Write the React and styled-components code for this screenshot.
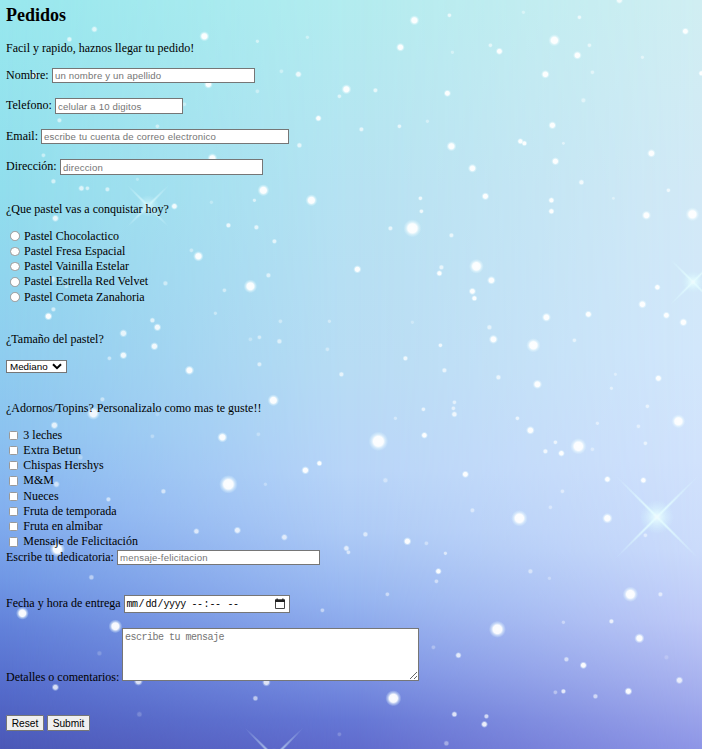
import React from 'react';
import styled, { createGlobalStyle } from 'styled-components';

const GlobalStyle = createGlobalStyle`
  * { box-sizing: border-box; }
  body { margin: 0; overflow: hidden; }
`;

const Page = styled.main`
  position: relative;
  isolation: isolate;
  width: 702px;
  height: 749px;
  overflow: hidden;
  padding: 5px 6px 0;
  color: #000;
  font-family: 'Liberation Serif', 'Times New Roman', serif;
  font-size: 12px;
  line-height: 16px;
`;

const Sky = styled.div`
  position: absolute;
  inset: 0;
  z-index: -1;
`;

const Tint = styled.div`
  position: absolute;
  inset: 0;
  background: linear-gradient(to bottom, ${(p) => p.$stops});
  mask-image: ${(p) => p.$mask || 'none'};
`;

const StarField = styled.svg`
  position: absolute;
  inset: 0;
`;

const Title = styled.h2`
  margin: 0 0 15px;
  font-size: 18px;
  line-height: 20px;
`;

const Text = styled.p`
  margin: ${(p) => p.$top || 0}px 0 ${(p) => p.$bottom || 0}px;
  height: 16px;
  white-space: nowrap;
`;

const Field = styled.div`
  display: flex;
  align-items: ${(p) => p.$align || 'center'};
  height: ${(p) => p.$height}px;
  margin-bottom: ${(p) => p.$gap}px;
`;

const Label = styled.label`
  flex: none;
  width: ${(p) => p.$width}px;
  margin-bottom: ${(p) => p.$lift ?? 1.5}px;
  white-space: nowrap;
`;

const Input = styled.input`
  width: ${(p) => p.$width}px;
  height: 100%;
  margin: 0;
  padding: 0 2px;
  border: 1px solid #767676;
  border-radius: 0;
  background: #fff;
  font: 9.6px 'Liberation Sans', Arial, sans-serif;
  letter-spacing: 0.17px;
  outline: none;
  &::placeholder { color: #757575; opacity: 1; }
`;

const Options = styled.div`
  display: grid;
  grid-auto-rows: 15.25px;
`;

const Option = styled.label`
  display: flex;
  align-items: center;
  gap: ${(p) => (p.$radio ? 4.5 : 5)}px;
  padding-left: ${(p) => (p.$radio ? 4 : 3)}px;
  line-height: 15px;
`;

const Tick = styled.input`
  appearance: none;
  flex: none;
  width: ${(p) => (p.type === 'radio' ? 9.5 : 9.3)}px;
  height: ${(p) => (p.type === 'radio' ? 9.5 : 9.3)}px;
  margin: 0;
  border: 1px solid #999;
  border-radius: ${(p) => (p.type === 'radio' ? '50%' : '1.5px')};
  background: #fff;
`;

const SizeSelect = styled.button`
  display: flex;
  align-items: center;
  justify-content: space-between;
  width: 61px;
  height: 13px;
  padding: 1px 4px 0 3px;
  border: 1px solid #767676;
  background: #fff;
  color: #000;
  font: 9.8px/11px 'Liberation Sans', Arial, sans-serif;
`;

const DateBox = styled.div`
  display: flex;
  align-items: center;
  width: 166px;
  height: 18px;
  padding: 0 3px 0 1px;
  border: 1px solid #767676;
  background: #fff;
  font: 10px 'Liberation Mono', monospace;
  line-height: 17px;
  letter-spacing: -0.4px;
`;

const Segment = styled.span`
  width: ${(p) => p.$width}px;
  padding-left: 0.5px;
  padding-top: 2px;
`;

const CalendarIcon = styled.svg`
  margin-left: auto;
`;

const Comments = styled.textarea`
  width: 297px;
  height: 53px;
  margin: 0;
  padding: 2px;
  border: 1px solid #767676;
  border-radius: 0;
  background: #fff;
  font: 10px/13px 'Liberation Mono', monospace;
  letter-spacing: -0.5px;
  outline: none;
  resize: both;
  &::placeholder { color: #757575; opacity: 1; }
`;

const Actions = styled.div`
  display: flex;
  gap: 3px;
`;

const ActionButton = styled.button`
  width: ${(p) => p.$width}px;
  height: 16px;
  padding: 1px 0 0;
  border: 1px solid #767676;
  border-radius: 1px;
  background: #efefef;
  color: #000;
  font: 10.2px/13px 'Liberation Sans', Arial, sans-serif;
`;

// x, y, radius, opacity
const STARS = [
  [414,20,4],[449,15,2,.7],[400,47,3.5],[346,89,4],[339,96,2,.6],[375,90,2.2,.7],[447,93,3],[318,118,2.7],
  [361,129,2.2,.7],[399,126,2,.7],[427,121,1.8,.4],[451,146,4],[472,168,3.6],[485,196,3.2],[311,200,4.7],
  [420,198,2,.8],[421,211,2,.8],[412,228,7],[390,228,2.2,.7],[451,235,2.2,.7],[554,40,4.8],[577,55,3.5],
  [545,74,3.5],[499,51,3],[490,45,2,.6],[579,17,2,.7],[589,45,2,.6],[592,72,2,.5],[583,100,2.3,.5],
  [552,125,3.3],[520,141,2.6],[524,143,2.4],[563,143,1.6,.5],[555,161,3.3],[581,182,2.5,.8],[551,200,2.6],
  [551,211,2.6],[685,31,3],[701,73,2.5],[642,57,1.8,.5],[651,153,3.5],[668,190,2,.7],[613,198,1.6,.4],
  [646,215,3.8],[692,214,5.5],[452,52,1.8,.4],[523,12,1.8,.4],[307,37,1.8,.4],[619,0,3,.8],
  [357,269,3.3],[441,267,2.3,.7],[439,273,2.6],[476,266,5.8],[491,280,3.5],[472,291,3],[474,298,2.5],
  [329,321,1.8,.4],[412,322,1.8,.3],[327,349,2,.4],[341,374,2.3,.7],[405,358,2.3,.8],[440,345,2,.8],
  [444,370,2.3,.7],[489,327,2.4,.6],[493,339,3.7],[546,317,3.7],[588,314,3],[533,345,5.6],[574,340,2,.6],
  [498,377,2.4,.7],[537,384,3.8],[657,287,2.7],[642,304,3.5],[666,315,3],[683,322,3.4],[615,374,1.7,.4],
  [611,388,1.8,.5],[658,378,3],[647,406,2,.6],[454,402,2,.6],[453,408,2,.6],[454,414,2.6,.8],[423,409,2,.7],
  [395,418,1.8,.4],[378,441,7.6],[424,435,2.8],[517,418,2,.7],[530,430,3.5],[597,423,1.8,.5],[678,421,5.5],
  [638,426,2,.5],[645,443,2,.6],[555,442,2,.7],[545,451,2.3,.8],[561,453,2.8],[578,446,6.4],[592,449,2,.4],
  [305,470,3.3],[319,463,2.5],[385,480,2.4,.4],[465,474,3],[607,479,2.8],[643,480,2.7],[562,491,2,.5],
  [519,518,6.4],[607,518,4.2],[472,510,2.2,.5],[550,507,2,.4],[365,534,2.4,.6],[346,548,2.6,.7],[348,552,2,.6],
  [407,541,3.3],[426,543,2,.4],[445,553,1.8,.6],[438,571,2.7],[436,581,2,.5],[387,594,2,.5],[322,610,2,.5],
  [530,571,2.3,.5],[549,578,1.8,.3],[630,594,6],[660,594,2.2,.6],[497,629,6.6],[563,622,1.8,.4],
  [611,621,2.2,.8],[639,638,4],[458,655,2.6,.8],[433,647,2,.3],[566,659,2.3,.6],[583,665,3],[679,680,3.1,.8],
  [628,691,3.2],[563,691,2.2,.8],[555,692,2,.4],[595,696,2.3,.6],[666,657,2.2,.2],[393,698,6.2],[454,714,2.5,.8],
  [484,724,2.8,.9],[486,716,2.2,.7],[446,743,2.4,.4],[339,734,2,.2],[645,535,2,.5],
  [204,36,4],[94,29,2.7,.7],[69,39,2.4,.7],[257,41,1.8,.5],[34,75,3.5,.7],[281,71,2,.4],[298,74,2.8,.8],
  [208,84,3.5],[257,91,2,.4],[184,104,2,.4],[59,120,2.2,.6],[157,126,2,.5],[299,145,2.4,.7],[212,158,4],
  [43,155,2,.5],[53,181,2.3,.6],[81,188,2.6,.7],[87,188,2,.6],[107,189,2.2,.6],[76,166,2,.5],[137,179,1.7,.3],
  [263,190,4.7],[254,200,1.8,.6],[174,206,2.8,.9],[55,218,3,.8],[228,225,2.3,.8],[256,227,2.3,.7],
  [211,202,1.8,.3],[274,241,2.2,.7],[198,256,4.1],[191,250,2,.4],[268,275,2.3,.6],[250,286,5.3],[165,283,2.3,.5],
  [224,290,2,.5],[52,279,3,.6],[66,286,2,.4],[53,309,2.2,.6],[48,316,3.3],[152,320,2.4,.7],[157,327,3.2,.9],
  [215,313,1.8,.4],[123,333,3.3,.8],[109,358,2,.5],[123,355,3.2,.9],[154,346,3.3,.9],[189,370,3.8],
  [280,321,2,.4],[259,337,2,.5],[279,341,2.4,.6],[250,339,2,.3],[259,364,2.2,.6],[102,399,2.2,.5],
  [273,400,4.6],[93,413,5.2,.9],[54,425,3.2,.8],[157,414,2,.2],[152,436,2,.3],[222,437,4.1],[258,434,2,.3],
  [228,484,7.2],[56,484,2.8,.6],[80,457,2.5,.3],[163,491,2.3,.6],[108,499,2.2,.6],[265,484,1.8,.3],
  [57,549,6],[196,531,2.6,.7],[237,530,3,.8],[284,537,2.8,.7],[91,577,2.4,.5],[22,613,5],[115,626,5.3],
  [55,687,3,.8],[138,681,3.6,.8],[266,682,3.4,.8],[255,698,2.4,.6],[139,714,2.5,.2],[99,653,2.3,.2],
];

const FLARES = [
  { x: 657, y: 517, r: 54, core: 17, o: 0.9 },
  { x: 693, y: 282, r: 29, core: 11, o: 0.85 },
  { x: 148, y: 206, r: 27, core: 11, o: 0.65 },
  { x: 274, y: 757, r: 38, core: 9, o: 0.6 },
];

const CENTER_MASK = 'linear-gradient(to right, transparent, #000 50%)';
const RIGHT_MASK = 'linear-gradient(to right, transparent 50%, #000)';

function Background() {
  return (
    <Sky aria-hidden="true">
      <Tint $stops="#98e8ee 0, #91deed 190px, #8fceef 350px, #8cc3f0 430px, #83b0ef 510px, #7097e5 580px, #6180d9 630px, #546bcb 690px, #4b58b7 749px" />
      <Tint $mask={CENTER_MASK} $stops="#b3ecef 0, #b6e2f2 190px, #b8dcf4 370px, #b8d5f8 470px, #aecbf6 530px, #96b5f0 600px, #7c94e4 670px, #6577d5 720px, #606bcd 749px" />
      <Tint $mask={RIGHT_MASK} $stops="#d0eef2 0, #d2e9f6 190px, #d2e7fb 350px, #d1e2fc 460px, #cbdbfb 550px, #bec9f7 620px, #a9b3ef 680px, #8e96e6 749px" />
      <StarField width="702" height="749" viewBox="0 0 702 749">
        <defs>
          <radialGradient id="glow">
            <stop offset="0" stopColor="#fff" />
            <stop offset=".5" stopColor="#fff" stopOpacity=".97" />
            <stop offset=".7" stopColor="#f2fdff" stopOpacity=".5" />
            <stop offset="1" stopColor="#dff8ff" stopOpacity="0" />
          </radialGradient>
          <radialGradient id="ray">
            <stop offset="0" stopColor="#f2ffff" />
            <stop offset=".35" stopColor="#e4fdff" stopOpacity=".8" />
            <stop offset="1" stopColor="#d8f8ff" stopOpacity="0" />
          </radialGradient>
          <radialGradient id="core">
            <stop offset="0" stopColor="#f6ffff" />
            <stop offset=".3" stopColor="#e6ffff" stopOpacity=".7" />
            <stop offset="1" stopColor="#d4f7ff" stopOpacity="0" />
          </radialGradient>
        </defs>
        {STARS.map(([x, y, r, o = 1], i) => (
          <circle key={i} cx={x + 0.4} cy={y + 0.3} r={r * 1.3} opacity={o * 0.97} fill="url(#glow)" />
        ))}
        {FLARES.map(({ x, y, r, core, o }) => (
          <g key={x} transform={`translate(${x} ${y}) rotate(45)`} opacity={o}>
            <ellipse rx={r * 1.1} ry="1.9" fill="url(#ray)" />
            <ellipse rx="1.9" ry={r * 1.1} fill="url(#ray)" />
            <circle r={core} fill="url(#core)" />
          </g>
        ))}
      </StarField>
    </Sky>
  );
}

const FIELDS = [
  { label: 'Nombre:', hint: 'un nombre y un apellido', labelWidth: 46, width: 203, height: 15, gap: 15 },
  { label: 'Telefono:', hint: 'celular a 10 digitos', labelWidth: 49, width: 128, height: 16, gap: 15 },
  { label: 'Email:', hint: 'escribe tu cuenta de correo electronico', labelWidth: 35, width: 248, height: 15, gap: 15 },
  { label: 'Dirección:', hint: 'direccion', labelWidth: 54, width: 203, height: 16, gap: 26 },
];

const CAKES = ['Pastel Chocolactico', 'Pastel Fresa Espacial', 'Pastel Vainilla Estelar', 'Pastel Estrella Red Velvet', 'Pastel Cometa Zanahoria'];
const TOPPINGS = ['3 leches', 'Extra Betun', 'Chispas Hershys', 'M&M', 'Nueces', 'Fruta de temporada', 'Fruta en almibar', 'Mensaje de Felicitación'];

function OptionList({ type, items }) {
  return (
    <Options>
      {items.map((item) => (
        <Option key={item} $radio={type === 'radio'}>
          <Tick type={type} name={type} />
          {item}
        </Option>
      ))}
    </Options>
  );
}

export default function App() {
  return (
    <Page>
      <GlobalStyle />
      <Background />
      <Title>Pedidos</Title>
      <Text $bottom={12}>Facil y rapido, haznos llegar tu pedido!</Text>
      {FIELDS.map((f) => (
        <Field key={f.label} $height={f.height} $gap={f.gap}>
          <Label $width={f.labelWidth}>{f.label}</Label>
          <Input $width={f.width} placeholder={f.hint} />
        </Field>
      ))}
      <Text $bottom={11.4}>¿Que pastel vas a conquistar hoy?</Text>
      <OptionList type="radio" items={CAKES} />
      <Text $top={26.35} $bottom={13}>¿Tamaño del pastel?</Text>
      <SizeSelect type="button">
        Mediano
        <svg width="10" height="7" viewBox="0 0 10 7" fill="none" stroke="#000" strokeWidth="2">
          <path d="M1 1.2 5 5.2 9 1.2" />
        </svg>
      </SizeSelect>
      <Text $top={27} $bottom={11.6}>¿Adornos/Topins? Personalizalo como mas te guste!!</Text>
      <OptionList type="checkbox" items={TOPPINGS} />
      <Field $height={15.4} $gap={30}>
        <Label $width={111} $lift={1}>Escribe tu dedicatoria:</Label>
        <Input $width={203} placeholder="mensaje-felicitacion" />
      </Field>
      <Field $height={18} $gap={15}>
        <Label $width={118}>Fecha y hora de entrega</Label>
        <DateBox>
          <Segment $width={12}>mm</Segment>
          <Segment $width={7}>/</Segment>
          <Segment $width={12}>dd</Segment>
          <Segment $width={6}>/</Segment>
          <Segment $width={28}>yyyy</Segment>
          <Segment $width={12}>--</Segment>
          <Segment $width={6}>:</Segment>
          <Segment $width={18}>--</Segment>
          <Segment $width={12}>--</Segment>
          <CalendarIcon width="12" height="12" viewBox="0 0 12 12">
            <path d="M1.5 2h9v8.5h-9z" fill="none" stroke="#444" />
            <path d="M1 1.5h10v2.500H1zM2.500.5h1.300v2H2.500zM8.200.5h1.300v2H8.200z" fill="#222" />
          </CalendarIcon>
        </DateBox>
      </Field>
      <Field $height={53} $gap={34} $align="flex-end">
        <Label $width={116} $lift={-4}>Detalles o comentarios:</Label>
        <Comments placeholder="escribe tu mensaje" />
      </Field>
      <Actions>
        <ActionButton type="reset" $width={38}>Reset</ActionButton>
        <ActionButton type="submit" $width={43}>Submit</ActionButton>
      </Actions>
    </Page>
  );
}
